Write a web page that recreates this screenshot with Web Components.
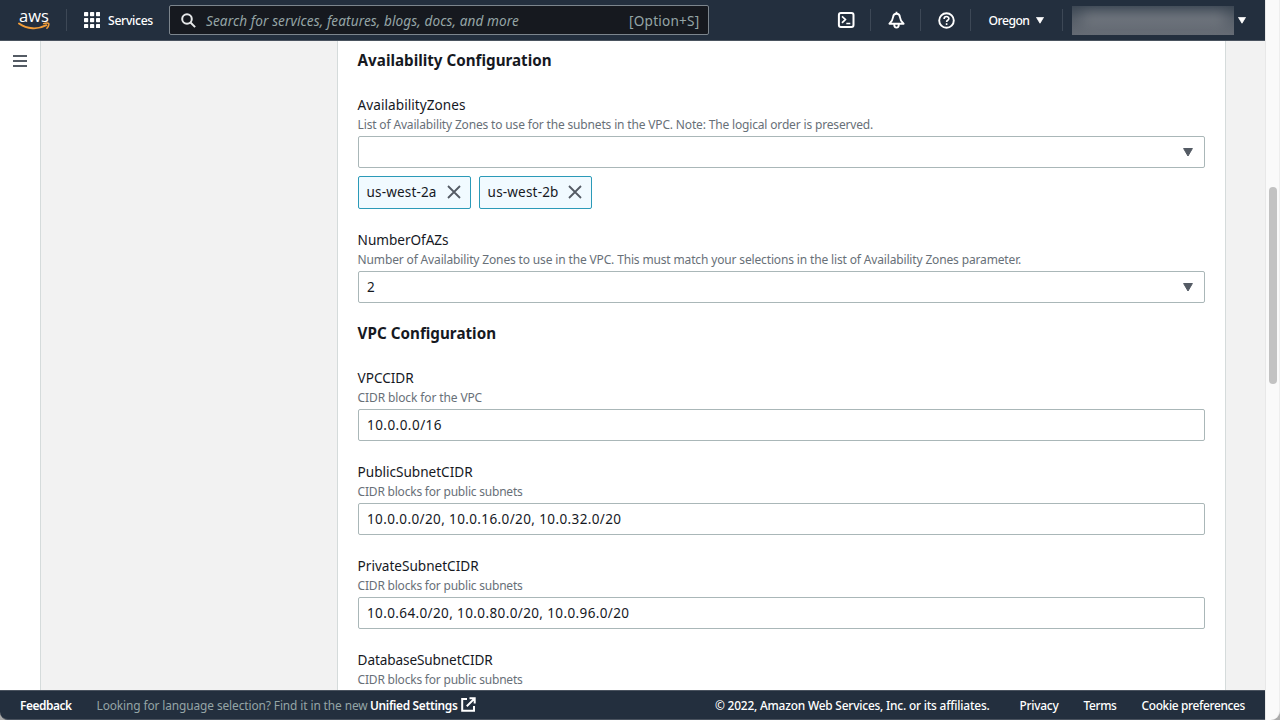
<!DOCTYPE html>
<html lang="en">
<head>
<meta charset="utf-8">
<title>Availability Configuration</title>
<style>
html,body{margin:0;height:100%;overflow:hidden;background:#aaa}
body{font-family:"Noto Sans","Open Sans",sans-serif;font-size:13.5px;color:#16191f}
</style>
</head>
<body>
<console-app></console-app>
<script>
const define = (name, html, setup) => customElements.define(name, class extends HTMLElement {
  connectedCallback() {
    if (this.shadowRoot) return;
    const root = this.attachShadow({ mode: 'open' });
    const t = document.createElement('template');
    t.innerHTML = html;
    root.append(t.content.cloneNode(true));
    if (setup) setup(this, root);
  }
});

/* Single line of text tracked so that it occupies the width "w". */
define('ui-text', `<style>:host{display:block;white-space:nowrap;width:max-content}span{display:inline-block}</style><span></span>`, (el, root) => {
  const span = root.querySelector('span');
  span.textContent = el.getAttribute('t');
  const w = parseFloat(el.getAttribute('w'));
  if (w) {
    const natural = span.getBoundingClientRect().width;
    span.style.letterSpacing = ((w - natural) / span.textContent.length) + 'px';
    el.style.width = w + 'px';
  }
});

define('ui-caret', `<style>:host{display:block;width:10px;height:9px;color:#545b64}svg{display:block;width:100%;height:100%}</style>
<svg viewBox="0 0 10 9" preserveAspectRatio="none"><path d="M.6.5h8.8L5 8z" fill="currentColor" stroke="currentColor" stroke-linejoin="round"/></svg>`);

define('ui-input', `<style>
:host{display:flex;align-items:center;justify-content:space-between;box-sizing:border-box;height:32px;border:1px solid #aab7b8;border-radius:2px;background:#fff;padding:0 11px 0 8.4px;font-size:13.5px}
</style><slot></slot>`);

define('ui-token', `<style>
:host{display:flex;align-items:center;box-sizing:border-box;width:113px;height:33px;border:1px solid #2b9ab8;border-radius:2px;background:#f1faff;padding:0 9px 1px 8px;justify-content:space-between}
svg{display:block}
</style><slot></slot><svg width="14" height="14" viewBox="0 0 14 14"><path d="M1 1l12 12M13 1L1 13" stroke="#545b64" stroke-width="1.8"/></svg>`);

define('form-field', `<style>
:host{display:block;margin-bottom:21px}
.l{height:20px;line-height:20px;font-size:13.6px}
.d{height:21px;line-height:20px;font-size:12px;font-weight:400;color:#687078}
</style><div class="l"><ui-text></ui-text></div><div class="d"><ui-text></ui-text></div><slot></slot>`, (el, root) => {
  const parts = root.querySelectorAll('ui-text');
  ['label', 'desc'].forEach((k, i) => {
    const n = document.createElement('ui-text');
    n.setAttribute('t', el.getAttribute(k));
    n.setAttribute('w', el.getAttribute(k + '-w'));
    parts[i].replaceWith(n);
  });
});

define('section-title', `<style>:host{display:block;height:24px;line-height:22px;font-size:15.2px;font-weight:700;margin-bottom:22px}</style><slot></slot>`);

define('top-bar', `<style>
:host{display:flex;align-items:center;box-sizing:border-box;height:41px;background:#232f3e;border-bottom:1px solid #4a535f;color:#fff;font-size:12.2px;font-weight:500;line-height:20px}
svg{display:block;flex:none}
.logo{width:32px;margin-left:18px;height:22px;display:grid}
.logo>*{grid-area:1/1}
.logo ui-text{font:500 16.5px/14px "Open Sans",sans-serif;margin-left:1px;margin-top:-1px}
i{display:block;width:1px;height:22px;background:#3d4856;flex:none}
ui-text{padding-top:1px}
.search{display:flex;align-items:center;box-sizing:border-box;width:540px;height:30px;border:1px solid #7c858d;border-radius:2px;background:#16191f;color:#95a5a6;margin-left:16px;padding:0 8.5px 0 11px;font-size:13.6px;font-weight:400}
.search em{font-style:italic;margin-left:10px;margin-right:auto}
.r{display:flex;align-items:center;margin-left:128px}
.acct{width:162px;height:29px;margin-left:9px;margin-right:4px;background:linear-gradient(180deg,#3b4653,#555d67 45%,#656b74);position:relative;overflow:hidden}
.acct::after{content:"";position:absolute;left:10px;right:8px;top:7px;height:12px;background:#858990;filter:blur(7px);opacity:.7}
ui-caret{color:#fff;width:8px;height:7px}
</style>
<div class="logo"><ui-text t="aws" w="30"></ui-text>
<svg width="32" height="22" viewBox="0 0 32 22" fill="none"><path d="M1 14.6C9 20.4 20 20.8 28.4 16.2" stroke="#f29d38" stroke-width="1.9" stroke-linecap="round"/><path d="M25.7 14.6c2-.7 4.7-.7 5 0 .3.8-.3 3.1-1.8 4.6" stroke="#f29d38" stroke-width="1.5" stroke-linecap="round"/></svg></div>
<i style="margin-left:16px;margin-right:17px"></i>
<svg width="16" height="16" viewBox="0 0 16 16" fill="#fff" id="grid"></svg>
<ui-text t="Services" w="45" style="margin-left:8px"></ui-text>
<div class="search">
<svg width="15" height="15" viewBox="0 0 15 15" fill="none" stroke="#e6e8e9" stroke-width="2"><circle cx="6" cy="6" r="4.8"/><path d="M9.5 9.5l4.6 4.6"/></svg>
<em><ui-text t="Search for services, features, blogs, docs, and more" w="313"></ui-text></em>
<ui-text t="[Option+S]" w="70.5"></ui-text></div>
<div class="r">
<svg width="18" height="18" viewBox="0 0 18 18" fill="none" stroke="#fff" stroke-width="2"><rect x="1.9" y="1.9" width="14.6" height="14.2" rx="2"/><path d="M5 5.3l3.4 3.2L5 11.9M9.3 12.5h4" stroke-width="1.7"/></svg>
<i style="margin:0 17px 0 15px"></i>
<svg width="17" height="18" viewBox="0 0 17 18" fill="none" stroke="#fff" stroke-width="1.9" stroke-linejoin="round"><path d="M8.5 2.7c-2 0-3.2 1.5-3.4 3.3C4.8 9 3.6 10.8 1.4 12.7h14.2c-2.2-1.9-3.4-3.7-3.7-6.7-.2-1.8-1.4-3.3-3.4-3.3zM8.5.8v2M6.2 13.2c0 4.6 4.6 4.6 4.6 0"/></svg>
<i style="margin:0 17px 0 15px"></i>
<svg width="17" height="17" viewBox="0 0 17 17" fill="none" stroke="#fff" stroke-width="1.9"><circle cx="8.5" cy="8.5" r="7.3"/><path d="M6.1 6.9c0-3.2 4.8-3 4.8-.3 0 1.6-2.3 1.7-2.3 3.3M8.6 11.2v1.7" stroke-width="1.6"/></svg>
<i style="margin:0 17.5px 0 15px"></i>
<ui-text t="Oregon" w="41"></ui-text>
<ui-caret style="margin-left:6px"></ui-caret>
<i style="margin-left:18px"></i>
<div class="acct"></div><ui-caret></ui-caret>
</div>`, (el, root) => {
  let s = '';
  for (let y = 0; y < 3; y++) for (let x = 0; x < 3; x++) s += `<rect x="${x * 6}" y="${y * 6}" width="4.2" height="4.2" rx=".7"/>`;
  root.getElementById('grid').innerHTML = s;
});

define('bottom-bar', `<style>
:host{display:flex;align-items:center;box-sizing:border-box;height:30px;background:#232f3e;border-top:1px solid #4a535f;border-bottom:1px solid #4a535f;border-bottom-left-radius:8px;color:#fff;font-size:11.9px;font-weight:500;line-height:20px;padding:0 20px 1px 20px}
.m{color:#95a5a6;font-weight:400;margin-left:25px;margin-right:2.5px}
svg{display:block;margin-left:3px;margin-right:auto}
</style>
<ui-text t="Feedback" w="51.5" style="font-weight:600"></ui-text>
<ui-text class="m" t="Looking for language selection? Find it in the new" w="271"></ui-text>
<ui-text t="Unified Settings" w="87.5" style="font-weight:600"></ui-text>
<svg width="15" height="15" viewBox="0 0 15 15" fill="none" stroke="#fff" stroke-width="2"><path d="M6 2H1.2v11.8H13V9M8.5 1.2h5.2v5.2M13.4 1.6L5.8 9.2"/></svg>
<ui-text t="© 2022, Amazon Web Services, Inc. or its affiliates." w="274.5"></ui-text>
<ui-text t="Privacy" w="39" style="margin-left:30px"></ui-text>
<ui-text t="Terms" w="33" style="margin-left:25px"></ui-text>
<ui-text t="Cookie preferences" w="103.5" style="margin-left:25px"></ui-text>`);

define('side-rail', `<style>:host{display:block;box-sizing:border-box;width:41px;background:#fff;border-right:1px solid #d5dbdb;padding:14px 0 0 13px}svg{display:block}</style>
<svg width="14" height="12" viewBox="0 0 14 12" stroke="#545b64" stroke-width="1.8"><path d="M0 1h14M0 6h14M0 11h14"/></svg>`);

define('scroll-bar', `<style>:host{display:block;box-sizing:border-box;width:15px;height:720px;background:#fafafa;border-left:1px solid #e8e8e8;border-right:1px solid #eee;padding:187px 0 0 3px;border-bottom-right-radius:9px}div{width:8px;height:197px;border-radius:4px;background:#c2c2c2}</style><div></div>`);

define('form-panel', `<style>:host{display:block;box-sizing:border-box;width:889px;margin-left:296px;background:#fff;border:solid #d5dbdb;border-width:0 1px;padding:8px 20.4px 0 19.6px;overflow:hidden;font-weight:450}</style><slot></slot>`);

define('console-app', `<style>
:host{display:grid;grid-template-columns:1265px 15px;height:720px;overflow:hidden}
.w{display:grid;grid-template-rows:41px 649px 30px;height:720px}
.main{display:flex;background:#f2f2f2;overflow:hidden}
.tokens{display:flex;gap:8px;margin-top:8px}
</style>
<div class="w"><top-bar></top-bar>
<div class="main"><side-rail></side-rail><form-panel>
<section-title><ui-text t="Availability Configuration" w="194"></ui-text></section-title>
<form-field label="AvailabilityZones" label-w="108" desc="List of Availability Zones to use for the subnets in the VPC. Note: The logical order is preserved." desc-w="515.5">
<ui-input><span></span><ui-caret></ui-caret></ui-input>
<div class="tokens"><ui-token><ui-text t="us-west-2a" w="70"></ui-text></ui-token><ui-token><ui-text t="us-west-2b" w="71"></ui-text></ui-token></div>
</form-field>
<form-field label="NumberOfAZs" label-w="91" desc="Number of Availability Zones to use in the VPC. This must match your selections in the list of Availability Zones parameter." desc-w="663.5" style="margin-bottom:19px">
<ui-input><ui-text t="2"></ui-text><ui-caret></ui-caret></ui-input></form-field>
<section-title><ui-text t="VPC Configuration" w="138.5"></ui-text></section-title>
<form-field label="VPCCIDR" label-w="56" desc="CIDR block for the VPC" desc-w="124.5"><ui-input><ui-text t="10.0.0.0/16" w="75"></ui-text></ui-input></form-field>
<form-field label="PublicSubnetCIDR" label-w="115" desc="CIDR blocks for public subnets" desc-w="165"><ui-input><ui-text t="10.0.0.0/20, 10.0.16.0/20, 10.0.32.0/20" w="254.5"></ui-text></ui-input></form-field>
<form-field label="PrivateSubnetCIDR" label-w="121" desc="CIDR blocks for public subnets" desc-w="165"><ui-input><ui-text t="10.0.64.0/20, 10.0.80.0/20, 10.0.96.0/20" w="262.5"></ui-text></ui-input></form-field>
<form-field label="DatabaseSubnetCIDR" label-w="135" desc="CIDR blocks for public subnets" desc-w="165"></form-field>
</form-panel></div>
<bottom-bar></bottom-bar></div>
<scroll-bar></scroll-bar>`);
</script>
</body>
</html>
